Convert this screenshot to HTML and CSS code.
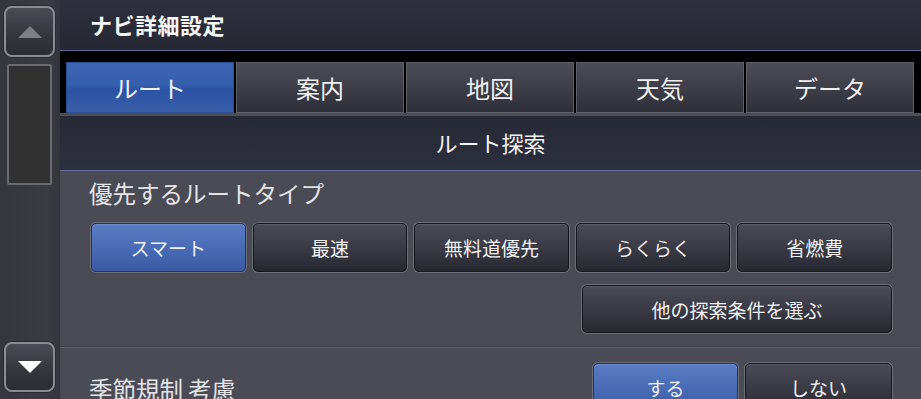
FILE: index.html
```html
<!DOCTYPE html>
<html lang="ja">
<head>
<meta charset="utf-8">
<link rel="stylesheet" href="styles.css">
</head>
<body>
<div class="screen">
  <aside class="side">
    <div class="sbtn up"><svg width="24" height="12" viewBox="0 0 24 12"><polygon points="0,12 12,0 24,12" fill="#7e7f87"/></svg></div>
    <div class="track"></div>
    <div class="sbtn down"><svg width="24" height="12" viewBox="0 0 24 12"><polygon points="0,0 24,0 12,12" fill="#ffffff"/></svg></div>
  </aside>
  <main class="main">
    <header class="head"><h1 class="title">ナビ詳細設定</h1></header>
    <nav class="tabbar">
      <div class="tab active">ルート</div>
      <div class="tab">案内</div>
      <div class="tab">地図</div>
      <div class="tab">天気</div>
      <div class="tab">データ</div>
    </nav>
    <div class="section">ルート探索</div>
    <div class="panel">
      <div class="label">優先するルートタイプ</div>
      <div class="grid">
        <div class="btn sel">スマート</div>
        <div class="btn">最速</div>
        <div class="btn">無料道優先</div>
        <div class="btn">らくらく</div>
        <div class="btn">省燃費</div>
      </div>
      <div class="row2"><div class="btn wide">他の探索条件を選ぶ</div></div>
      <div class="sep"></div>
      <div class="row3">
        <div class="label2">季節規制 考慮</div>
        <div class="pair">
          <div class="btn sel b1">する</div>
          <div class="btn b2">しない</div>
        </div>
      </div>
    </div>
  </main>
</div>
</body>
</html>
```

FILE: styles.css
```css
* { box-sizing: border-box; margin: 0; padding: 0; }
html, body { width: 921px; height: 399px; overflow: hidden; background: #2a2c38; }
body { font-family: "Noto Sans CJK JP", "Noto Sans", sans-serif; color: #f2f2f2; }
.screen { display: flex; width: 921px; height: 399px; }

.side {
  width: 60px; flex: none;
  background: linear-gradient(90deg, #36373e 0%, #3b3c43 80%, #34353c 100%);
  display: flex; flex-direction: column; align-items: center;
  padding: 6px 0 7px 0;
}
.sbtn {
  flex: none;
  width: 51px; height: 51px; margin-left: -1px;
  border: 2px solid #8b8c93; border-radius: 8px;
  background: linear-gradient(180deg, #4a4b54 0%, #34353d 60%, #2c2d34 100%);
  display: flex; align-items: center; justify-content: center;
  box-shadow: 0 0 0 1px #2a2b30;
}
.track {
  flex: none;
  width: 45px; height: 121px; margin: 7px 0 0 -1px;
  border: 2px solid #6b6b70; border-radius: 2px;
  background: #313131;
}
.down { margin-top: auto; height: 50px; }

.main { flex: 1; display: flex; flex-direction: column; min-width: 0; overflow: hidden; }
.head {
  flex: none;
  height: 51px; padding-left: 30px;
  background: linear-gradient(180deg, #2e303d 0%, #262834 100%);
  border-bottom: 1px solid #5d6891;
  display: flex; align-items: center;
}
.title { font-size: 22px; font-weight: 700; letter-spacing: 0.5px; color: #f5f5f5; padding-bottom: 2px; }

.tabbar {
  flex: none;
  background: #000;
  padding: 11px 7px 0 6px;
  display: flex; gap: 2px;
  border-bottom: 3px solid #4d4e55;
}
.tab {
  flex: 1; height: 51px;
  border: 1px solid #5f6067;
  background: linear-gradient(180deg, #4c4d57 0%, #3d3e48 50%, #2e2f39 100%);
  display: flex; align-items: center; justify-content: center;
  font-size: 24px; color: #f0f0f0;
}
.tab.active {
  border-color: #2b4f95;
  background: linear-gradient(180deg, #3c63b2 0%, #3560ad 45%, #2a53a3 55%, #3a5fab 100%);
}

.section {
  flex: none;
  height: 55px;
  background: linear-gradient(180deg, #272936 0%, #2c2f3d 100%);
  border-bottom: 1px solid #6371a0;
  display: flex; align-items: center; justify-content: center;
  font-size: 22px; color: #f2f2f2; padding-bottom: 2px;
}

.panel {
  flex: 1; min-height: 0;
  background: #4a4b55;
  padding: 0 29px 0 29px;
}
.label { height: 44px; line-height: 44px; font-size: 23.5px; color: #e4e4e6; margin-bottom: 8px; }
.grid {
  display: grid; grid-template-columns: repeat(5, 1fr); gap: 7px;
  padding-left: 2px;
}
.btn {
  height: 49px;
  border: 1px solid #17181d; border-radius: 5px;
  box-shadow: 0 0 0 1px #6d6e76, inset 0 1px 0 #575863;
  background: linear-gradient(180deg, #4a4b56 0%, #3a3b45 50%, #272830 100%);
  display: flex; align-items: center; justify-content: center;
  font-size: 19px; color: #f0f0f0;
}
.btn.sel {
  border-color: #1e3470;
  box-shadow: 0 0 0 1px #6d6e76, inset 0 1px 0 #6a8ad0;
  background: linear-gradient(180deg, #5a7dc5 0%, #4a6cb6 50%, #3a5aa3 100%);
}
.row2 { display: flex; justify-content: flex-end; margin-top: 13px; }
.wide { width: 310px; height: 48px; }
.sep { height: 2px; background: #5e5f67; margin: 13px -29px 0 -29px; border-top: 1px solid #3f4048; }
.row3 { display: flex; align-items: flex-start; justify-content: space-between; margin-top: 15px; }
.label2 { font-size: 23.5px; color: #e4e4e6; margin-top: 9px; }
.pair { display: flex; gap: 7px; }
.b1 { width: 145px; height: 49px; flex: none; }
.b2 { width: 147px; height: 49px; flex: none; }
```
